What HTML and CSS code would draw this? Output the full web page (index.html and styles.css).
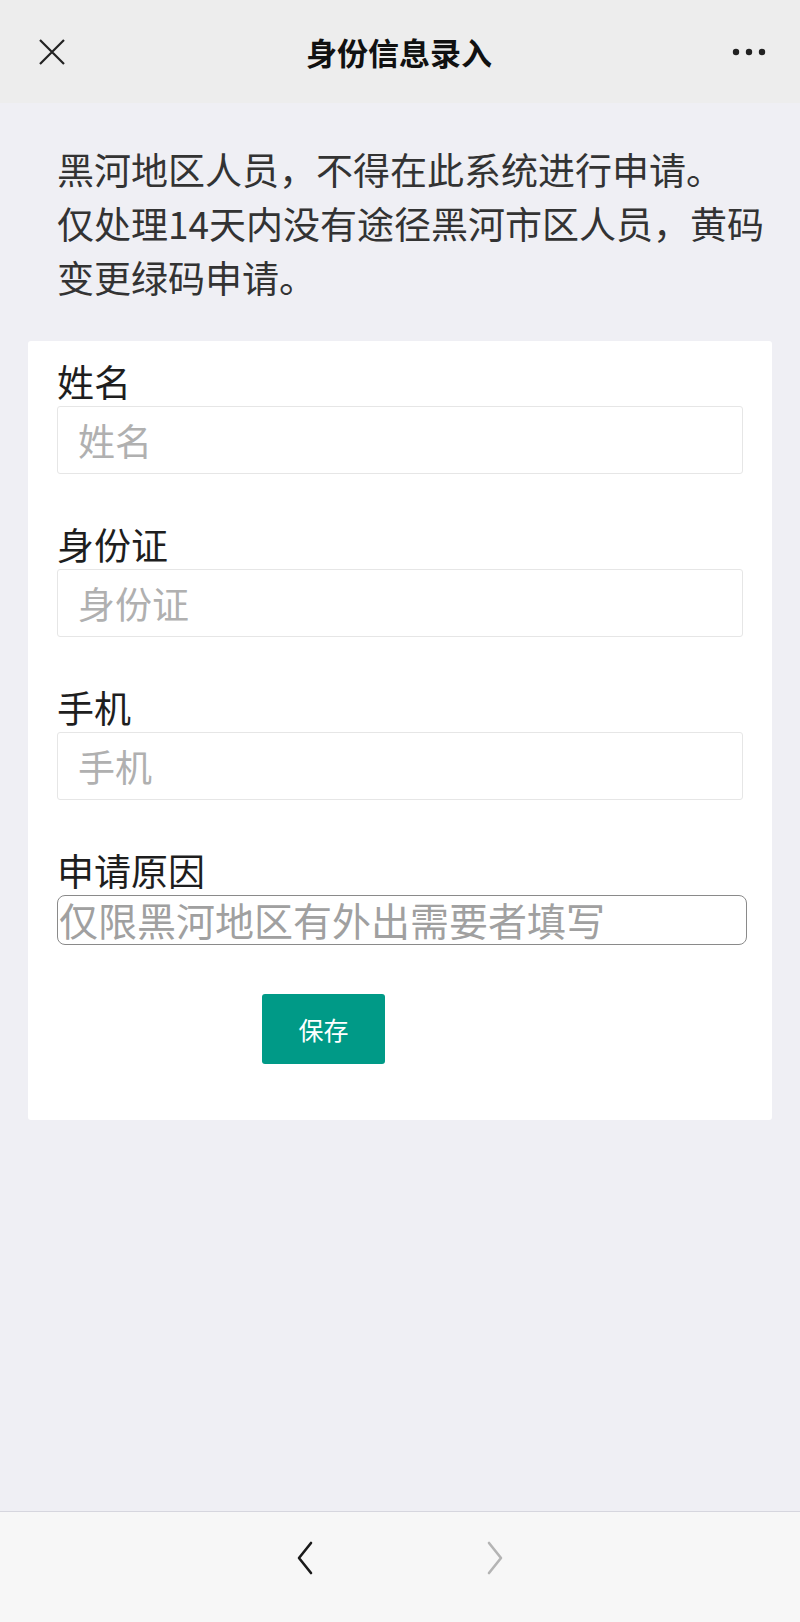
FILE: index.html
```html
<!DOCTYPE html>
<html lang="zh-CN">
  <head>
    <meta charset="UTF-8" />
    <meta name="viewport" content="width=device-width, initial-scale=1.0" />
    <title>身份信息录入</title>
    <link rel="stylesheet" href="styles.css">
  </head>
  <body>
    <div class="header">
      <button class="header-icon" type="button">
        <svg width="28" height="28" viewBox="0 0 28 28">
          <path d="M2 2 L26 26 M26 2 L2 26" stroke="#222" stroke-width="2.2" fill="none" />
        </svg>
      </button>
      <p class="header-title">身份信息录入</p>
      <button class="header-icon" type="button">
        <svg width="34" height="8" viewBox="0 0 34 8">
          <circle cx="4" cy="4" r="3.2" fill="#222" />
          <circle cx="17" cy="4" r="3.2" fill="#222" />
          <circle cx="30" cy="4" r="3.2" fill="#222" />
        </svg>
      </button>
    </div>

    <div class="main">
      <p class="notice">黑河地区人员，不得在此系统进行申请。<br />仅处理14天内没有途径黑河市区人员，黄码变更绿码申请。</p>

      <form class="card" id="infoForm">
        <div class="field">
          <label for="userName">姓名</label>
          <input type="text" id="userName" class="text-input" placeholder="姓名" />
        </div>
        <div class="field">
          <label for="idCard">身份证</label>
          <input type="text" id="idCard" class="text-input" placeholder="身份证" />
        </div>
        <div class="field">
          <label for="phone">手机</label>
          <input type="text" id="phone" class="text-input" placeholder="手机" />
        </div>
        <div class="field field-last">
          <label for="reason">申请原因</label>
          <textarea id="reason" class="reason-input" rows="1" placeholder="仅限黑河地区有外出需要者填写"></textarea>
        </div>
        <button class="save-btn" type="button">保存</button>
      </form>
    </div>

    <div class="footer">
      <svg width="20" height="34" viewBox="0 0 20 34">
        <path d="M16 2 L4 17 L16 32" stroke="#1a1a1a" stroke-width="2.6" fill="none" stroke-linecap="round" stroke-linejoin="round" />
      </svg>
      <svg width="20" height="34" viewBox="0 0 20 34">
        <path d="M4 2 L16 17 L4 32" stroke="#b4b4b4" stroke-width="2.6" fill="none" stroke-linecap="round" stroke-linejoin="round" />
      </svg>
    </div>
  </body>
</html>
```

FILE: styles.css
```css
body {
  margin: 0;
  width: 800px;
  height: 1622px;
  display: flex;
  flex-direction: column;
  background-color: #efeff4;
  font-family: "Noto Sans CJK SC", "Noto Sans", sans-serif;
  color: #1e1e1e;
}
.header {
  height: 103px;
  flex-shrink: 0;
  display: flex;
  flex-direction: row;
  justify-content: space-between;
  align-items: center;
  padding: 0 34px 0 38px;
  background-color: #ededed;
}
.header-icon {
  border: none;
  background: none;
  padding: 0;
  display: flex;
  align-items: center;
}
.header-title {
  margin: 0;
  font-size: 31px;
  font-weight: bold;
  color: #111;
}
.main {
  flex: 1;
}
.notice {
  margin: 0;
  padding: 39px 20px 0 57px;
  font-size: 37px;
  line-height: 54px;
  color: #333;
}
.card {
  margin: 37px 28px 0 28px;
  padding: 16px 29px 56px 29px;
  background-color: #fff;
  border-radius: 3px;
}
.field {
  margin-bottom: 46px;
}
.field-last {
  margin-bottom: 49px;
}
.field label {
  display: block;
  font-size: 37px;
  line-height: 48px;
  margin-bottom: 1px;
  color: #1e1e1e;
}
.text-input {
  display: block;
  width: 100%;
  height: 68px;
  box-sizing: border-box;
  padding: 0 20px;
  border: 1px solid #e6e6e6;
  border-radius: 3px;
  font-family: inherit;
  font-size: 37px;
  color: #333;
  outline: none;
}
.text-input::placeholder {
  color: #b0b0b0;
}
.reason-input {
  display: block;
  width: 690px;
  height: 50px;
  box-sizing: border-box;
  padding: 0 1px;
  border: 1.5px solid #8a8a8a;
  border-radius: 8px;
  font-family: inherit;
  font-size: 39px;
  line-height: 46px;
  resize: none;
  overflow: hidden;
  outline: none;
}
.reason-input::placeholder {
  color: #a0a0a0;
}
.save-btn {
  display: block;
  margin-left: 205px;
  width: 123px;
  height: 70px;
  background-color: #009a87;
  color: #fff;
  border: none;
  border-radius: 3px;
  font-family: inherit;
  font-size: 25px;
  cursor: pointer;
}
.footer {
  height: 111px;
  flex-shrink: 0;
  box-sizing: border-box;
  padding-top: 29px;
  display: flex;
  flex-direction: row;
  justify-content: center;
  align-items: flex-start;
  gap: 170px;
  background-color: #f7f7f7;
  border-top: 1px solid #d6d6de;
}
```
